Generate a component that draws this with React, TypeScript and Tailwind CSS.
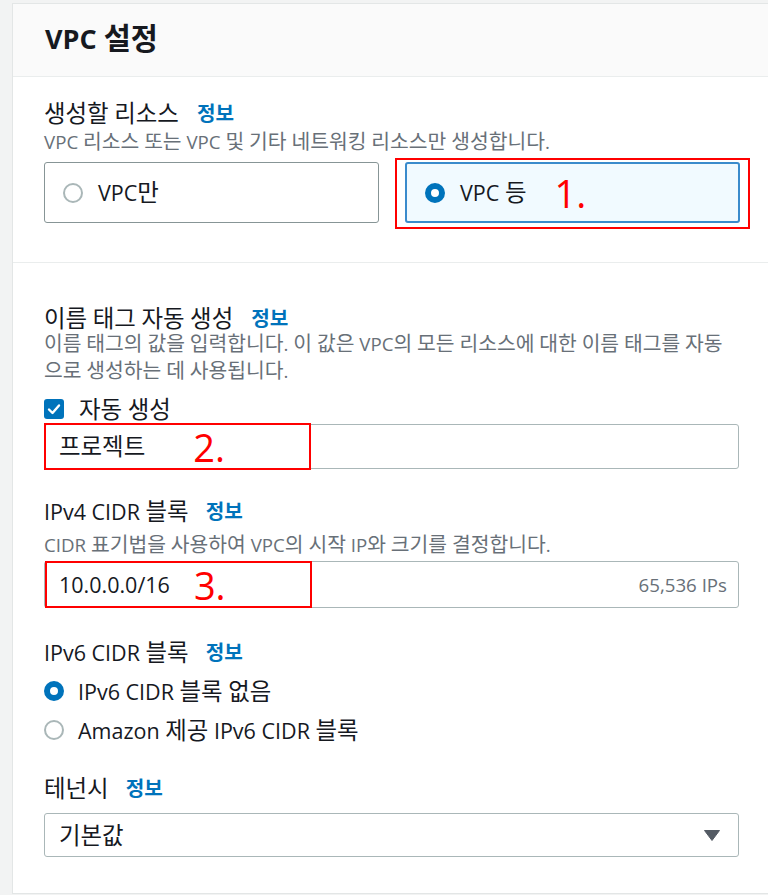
import React from "react";

function K({ t }: { t: string }) {
  const parts = t.split(/([\uAC00-\uD7A3]+)/);
  return (
    <>
      {parts.map((p, i) =>
        /[\uAC00-\uD7A3]/.test(p) ? (
          <span key={i} className="text-[1.09em]">
            {p}
          </span>
        ) : (
          <React.Fragment key={i}>{p}</React.Fragment>
        )
      )}
    </>
  );
}

function Label({ text, gap = "ml-[18px]" }: { text: string; gap?: string }) {
  return (
    <div className="flex h-[23px] items-center whitespace-nowrap text-[21.5px] leading-[23px]">
      <span>
        <K t={text} />
      </span>
      <span className={`${gap} text-[18.5px] font-bold text-[#0073bb]`}>
        <K t="정보" />
      </span>
    </div>
  );
}

function RadioEmpty() {
  return <span className="box-border block h-[20px] w-[20px] shrink-0 rounded-full border-2 border-[#aab7b8] bg-white" />;
}

function RadioFilled() {
  return <span className="box-border block h-[20px] w-[20px] shrink-0 rounded-full border-[6px] border-[#0073bb] bg-white" />;
}

export default function App() {
  return (
    <div className="relative h-[895px] w-[768px] overflow-hidden bg-[#f2f3f3] pl-[12px] pt-[3px] font-['Open_Sans','Noto_Sans_CJK_KR',sans-serif] text-[#16191f]">
      <div className="h-[891px] border-b border-l border-t border-[#e3e6e6] bg-white">
        {/* header */}
        <div className="flex h-[73px] items-center border-b border-[#eaeded] bg-[#fafafa] pb-[4px] pl-[32px]">
          <h2 className="text-[27px] font-bold leading-[34px]">
            <K t="VPC 설정" />
          </h2>
        </div>

        {/* section 1 */}
        <div className="h-[186px] border-b border-[#eaeded] pl-[31px] pt-[25px]">
          <div className="w-[696px]">
            <Label text="생성할 리소스" gap="ml-[18px]" />
            <div className="mt-[3px] h-[27px] whitespace-nowrap text-[18.7px] leading-[27px] text-[#687078]">
              <K t="VPC 리소스 또는 VPC 및 기타 네트워킹 리소스만 생성합니다." />
            </div>
            <div className="mt-[7px] grid h-[61px] grid-cols-2 gap-[26px]">
              <div className="flex items-center rounded-[3px] border border-[#879596] pl-[18px] leading-[30px]">
                <RadioEmpty />
                <span className="ml-[15px] text-[21.5px]">
                  <K t="VPC만" />
                </span>
              </div>
              <div className="relative flex items-center rounded-[3px] border-2 border-[#3a8bcc] bg-[#f1faff] pl-[18px] leading-[30px]">
                <RadioFilled />
                <span className="ml-[15px] text-[21.5px]">
                  <K t="VPC 등" />
                </span>
                <span className="ml-[28px] text-[38px] leading-none text-[#ff0000]">1.</span>
                <div className="pointer-events-none absolute left-[-12px] top-[-6px] h-[71px] w-[355px] border-2 border-[#ff0000]" />
              </div>
            </div>
          </div>
        </div>

        {/* section 2 */}
        <div className="pl-[31px] pt-[44px]">
          <div className="w-[696px]">
            <Label text="이름 태그 자동 생성" gap="ml-[18px]" />
            <div className="whitespace-nowrap text-[18.7px] leading-[27px] text-[#687078]">
              <K t="이름 태그의 값을 입력합니다. 이 값은 VPC의 모든 리소스에 대한 이름 태그를 자동" />
              <br />
              <K t="으로 생성하는 데 사용됩니다." />
            </div>
            <div className="mt-[13px] flex h-[24px] items-center leading-[24px]">
              <span className="flex h-[20px] w-[20px] items-center justify-center rounded-[3px] bg-[#0073bb]">
                <svg width="14" height="14" viewBox="0 0 14 14" fill="none">
                  <path d="M2 7.5 L5.5 11 L12 3.5" stroke="white" strokeWidth="2.4" strokeLinecap="round" strokeLinejoin="round" />
                </svg>
              </span>
              <span className="ml-[15px] text-[21.5px]">
                <K t="자동 생성" />
              </span>
            </div>
            <div className="relative mt-[3px] flex h-[45px] w-[695px] items-center rounded-[3px] border border-[#aab7b8] px-[14px] leading-[30px]">
              <span className="text-[21.5px]">
                <K t="프로젝트" />
              </span>
              <span className="ml-[48px] text-[38px] leading-none text-[#ff0000]">2.</span>
              <div className="pointer-events-none absolute left-[-1px] top-[-2px] h-[47px] w-[267px] border-2 border-[#ff0000]" />
            </div>

            <div className="mt-[31px]">
              <Label text="IPv4 CIDR 블록" gap="ml-[17px]" />
            </div>
            <div className="mt-[8px] h-[27px] whitespace-nowrap text-[18.7px] leading-[27px] text-[#687078]">
              <K t="CIDR 표기법을 사용하여 VPC의 시작 IP와 크기를 결정합니다." />
            </div>
            <div className="relative mt-[3px] flex h-[47px] w-[695px] items-center rounded-[3px] border border-[#aab7b8] pl-[14px] pr-[11px] leading-[30px]">
              <span className="text-[21.5px]">10.0.0.0/16</span>
              <span className="ml-[24px] text-[38px] leading-none text-[#ff0000]">3.</span>
              <span className="ml-auto text-[18.7px] text-[#687078]">65,536 IPs</span>
              <div className="pointer-events-none absolute left-[0px] top-[-1px] h-[47px] w-[267px] border-2 border-[#ff0000]" />
            </div>

            <div className="mt-[33px]">
              <Label text="IPv6 CIDR 블록" gap="ml-[17px]" />
            </div>
            <div className="mt-[12px] flex h-[30px] items-center leading-[30px]">
              <RadioFilled />
              <span className="ml-[14px] text-[21.5px]">
                <K t="IPv6 CIDR 블록 없음" />
              </span>
            </div>
            <div className="mt-[9px] flex h-[30px] items-center leading-[30px]">
              <RadioEmpty />
              <span className="ml-[14px] text-[21.5px]">
                <K t="Amazon 제공 IPv6 CIDR 블록" />
              </span>
            </div>

            <div className="mt-[32px]">
              <Label text="테넌시" gap="ml-[17px]" />
            </div>
            <div className="mt-[13px] flex h-[44px] w-[695px] items-center rounded-[3px] border border-[#aab7b8] pl-[14px] pr-[18px] leading-[30px]">
              <span className="text-[21.5px]">
                <K t="기본값" />
              </span>
              <svg className="ml-auto" width="16" height="11" viewBox="0 0 16 11">
                <path d="M0.5 0.5 H15.5 L8 10.5 Z" fill="#545b64" stroke="#545b64" strokeLinejoin="round" />
              </svg>
            </div>
          </div>
        </div>
      </div>
    </div>
  );
}
